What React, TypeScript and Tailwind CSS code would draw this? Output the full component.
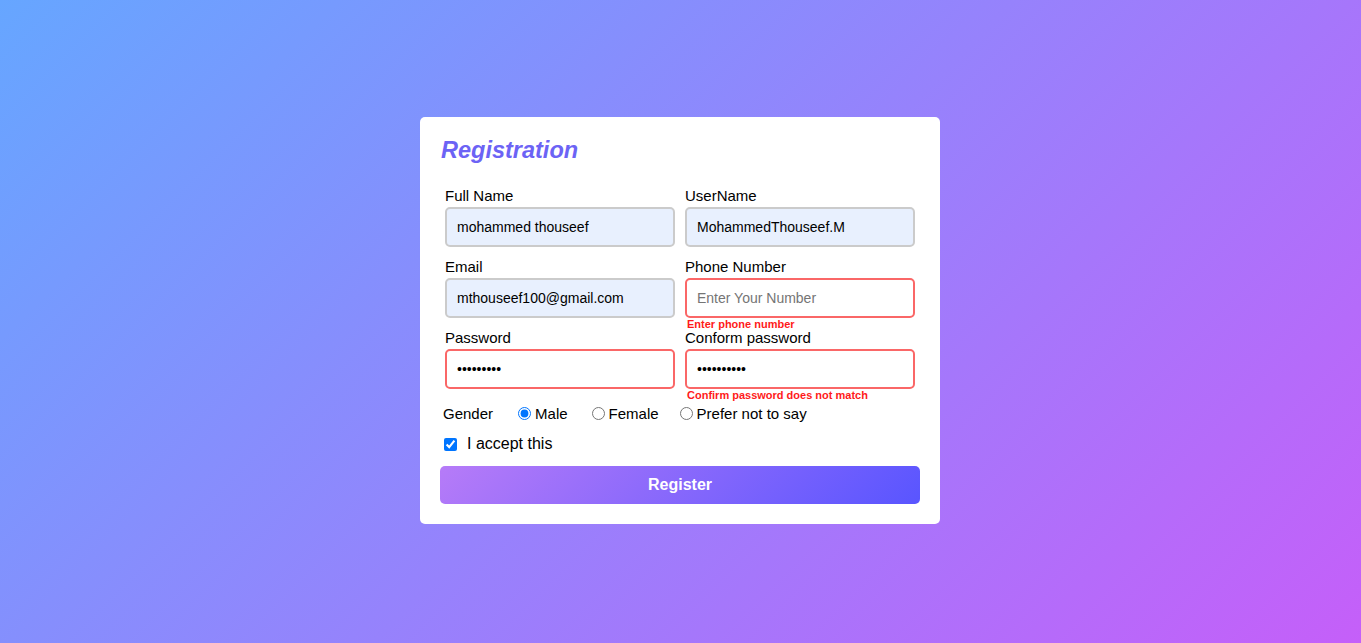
import React from "react";

type FieldProps = {
  label: string;
  type?: string;
  value?: string;
  placeholder?: string;
  filled?: boolean;
  invalid?: boolean;
  error?: string;
};

const Field = ({ label, type = "text", value, placeholder, filled, invalid, error }: FieldProps) => {
  return (
    <div className="flex flex-col px-[5px]">
      <label className="mb-[3px] text-[15px] text-black">{label}</label>
      <input
        type={type}
        defaultValue={value}
        placeholder={placeholder}
        className={
          "h-10 w-full rounded-[5px] border-2 px-[10px] text-[14px] text-black outline-none placeholder:text-[#757575] " +
          (filled ? "bg-[#e8f0fe] " : "bg-white ") +
          (invalid ? "border-[#fa6767]" : "border-[#cbcbcb]")
        }
      />
      {/* error slot, text hangs below the input */}
      <div className="h-[11px]">
        {error && (
          <p className="ml-[2px] text-[11px] leading-[13px] font-bold text-[#ff1a1a]">{error}</p>
        )}
      </div>
    </div>
  );
};

export default function App() {
  return (
    <div
      className="flex min-h-screen items-center justify-center bg-[linear-gradient(135deg,#66a6ff,#c55ff9)] pr-px pb-[2px] leading-[normal]"
      style={{ fontFamily: '"Liberation Sans", Arial, sans-serif' }}
    >
      <form className="w-[520px] rounded-[5px] bg-white p-5">
        {/* Title */}
        <h1 className="ml-px text-[23.5px] leading-[26px] font-bold italic text-[#6c63f5]">Registration</h1>

        {/* Fields */}
        <div className="mt-[24px] grid grid-cols-2">
          <Field label="Full Name" value="mohammed thouseef" filled />
          <Field label="UserName" value="MohammedThouseef.M" filled />
          <Field label="Email" value="mthouseef100@gmail.com" filled />
          <Field
            label="Phone Number"
            placeholder="Enter Your Number"
            invalid
            error="Enter phone number"
          />
          <Field label="Password" type="password" value="123456789" invalid />
          <Field
            label="Conform password"
            type="password"
            value="1234567890"
            invalid
            error="Confirm password does not match"
          />
        </div>

        {/* Gender */}
        <div className="mt-[5px] ml-[3px] flex items-center text-[15px] text-black">
          <span>Gender</span>
          <label className="ml-[25px] flex items-center">
            <input type="radio" name="gender" defaultChecked className="m-0 h-[13px] w-[13px]" />
            <span className="ml-[4px]">Male</span>
          </label>
          <label className="ml-[24px] flex items-center">
            <input type="radio" name="gender" className="m-0 h-[13px] w-[13px]" />
            <span className="ml-[4px]">Female</span>
          </label>
          <label className="ml-[21px] flex items-center">
            <input type="radio" name="gender" className="m-0 h-[13px] w-[13px]" />
            <span className="ml-[4px]">Prefer not to say</span>
          </label>
        </div>

        {/* Terms */}
        <label className="mt-[13px] ml-[4px] flex items-center text-[16px] text-black">
          <input type="checkbox" defaultChecked className="m-0 h-[13px] w-[13px]" />
          <span className="ml-[10px]">I accept this</span>
        </label>

        {/* Submit */}
        <button
          type="button"
          className="mt-[13px] h-[38px] w-full rounded-[5px] bg-[linear-gradient(135deg,#b67bf8,#5955ff)] text-[16px] font-bold text-white"
        >
          Register
        </button>
      </form>
    </div>
  );
}
